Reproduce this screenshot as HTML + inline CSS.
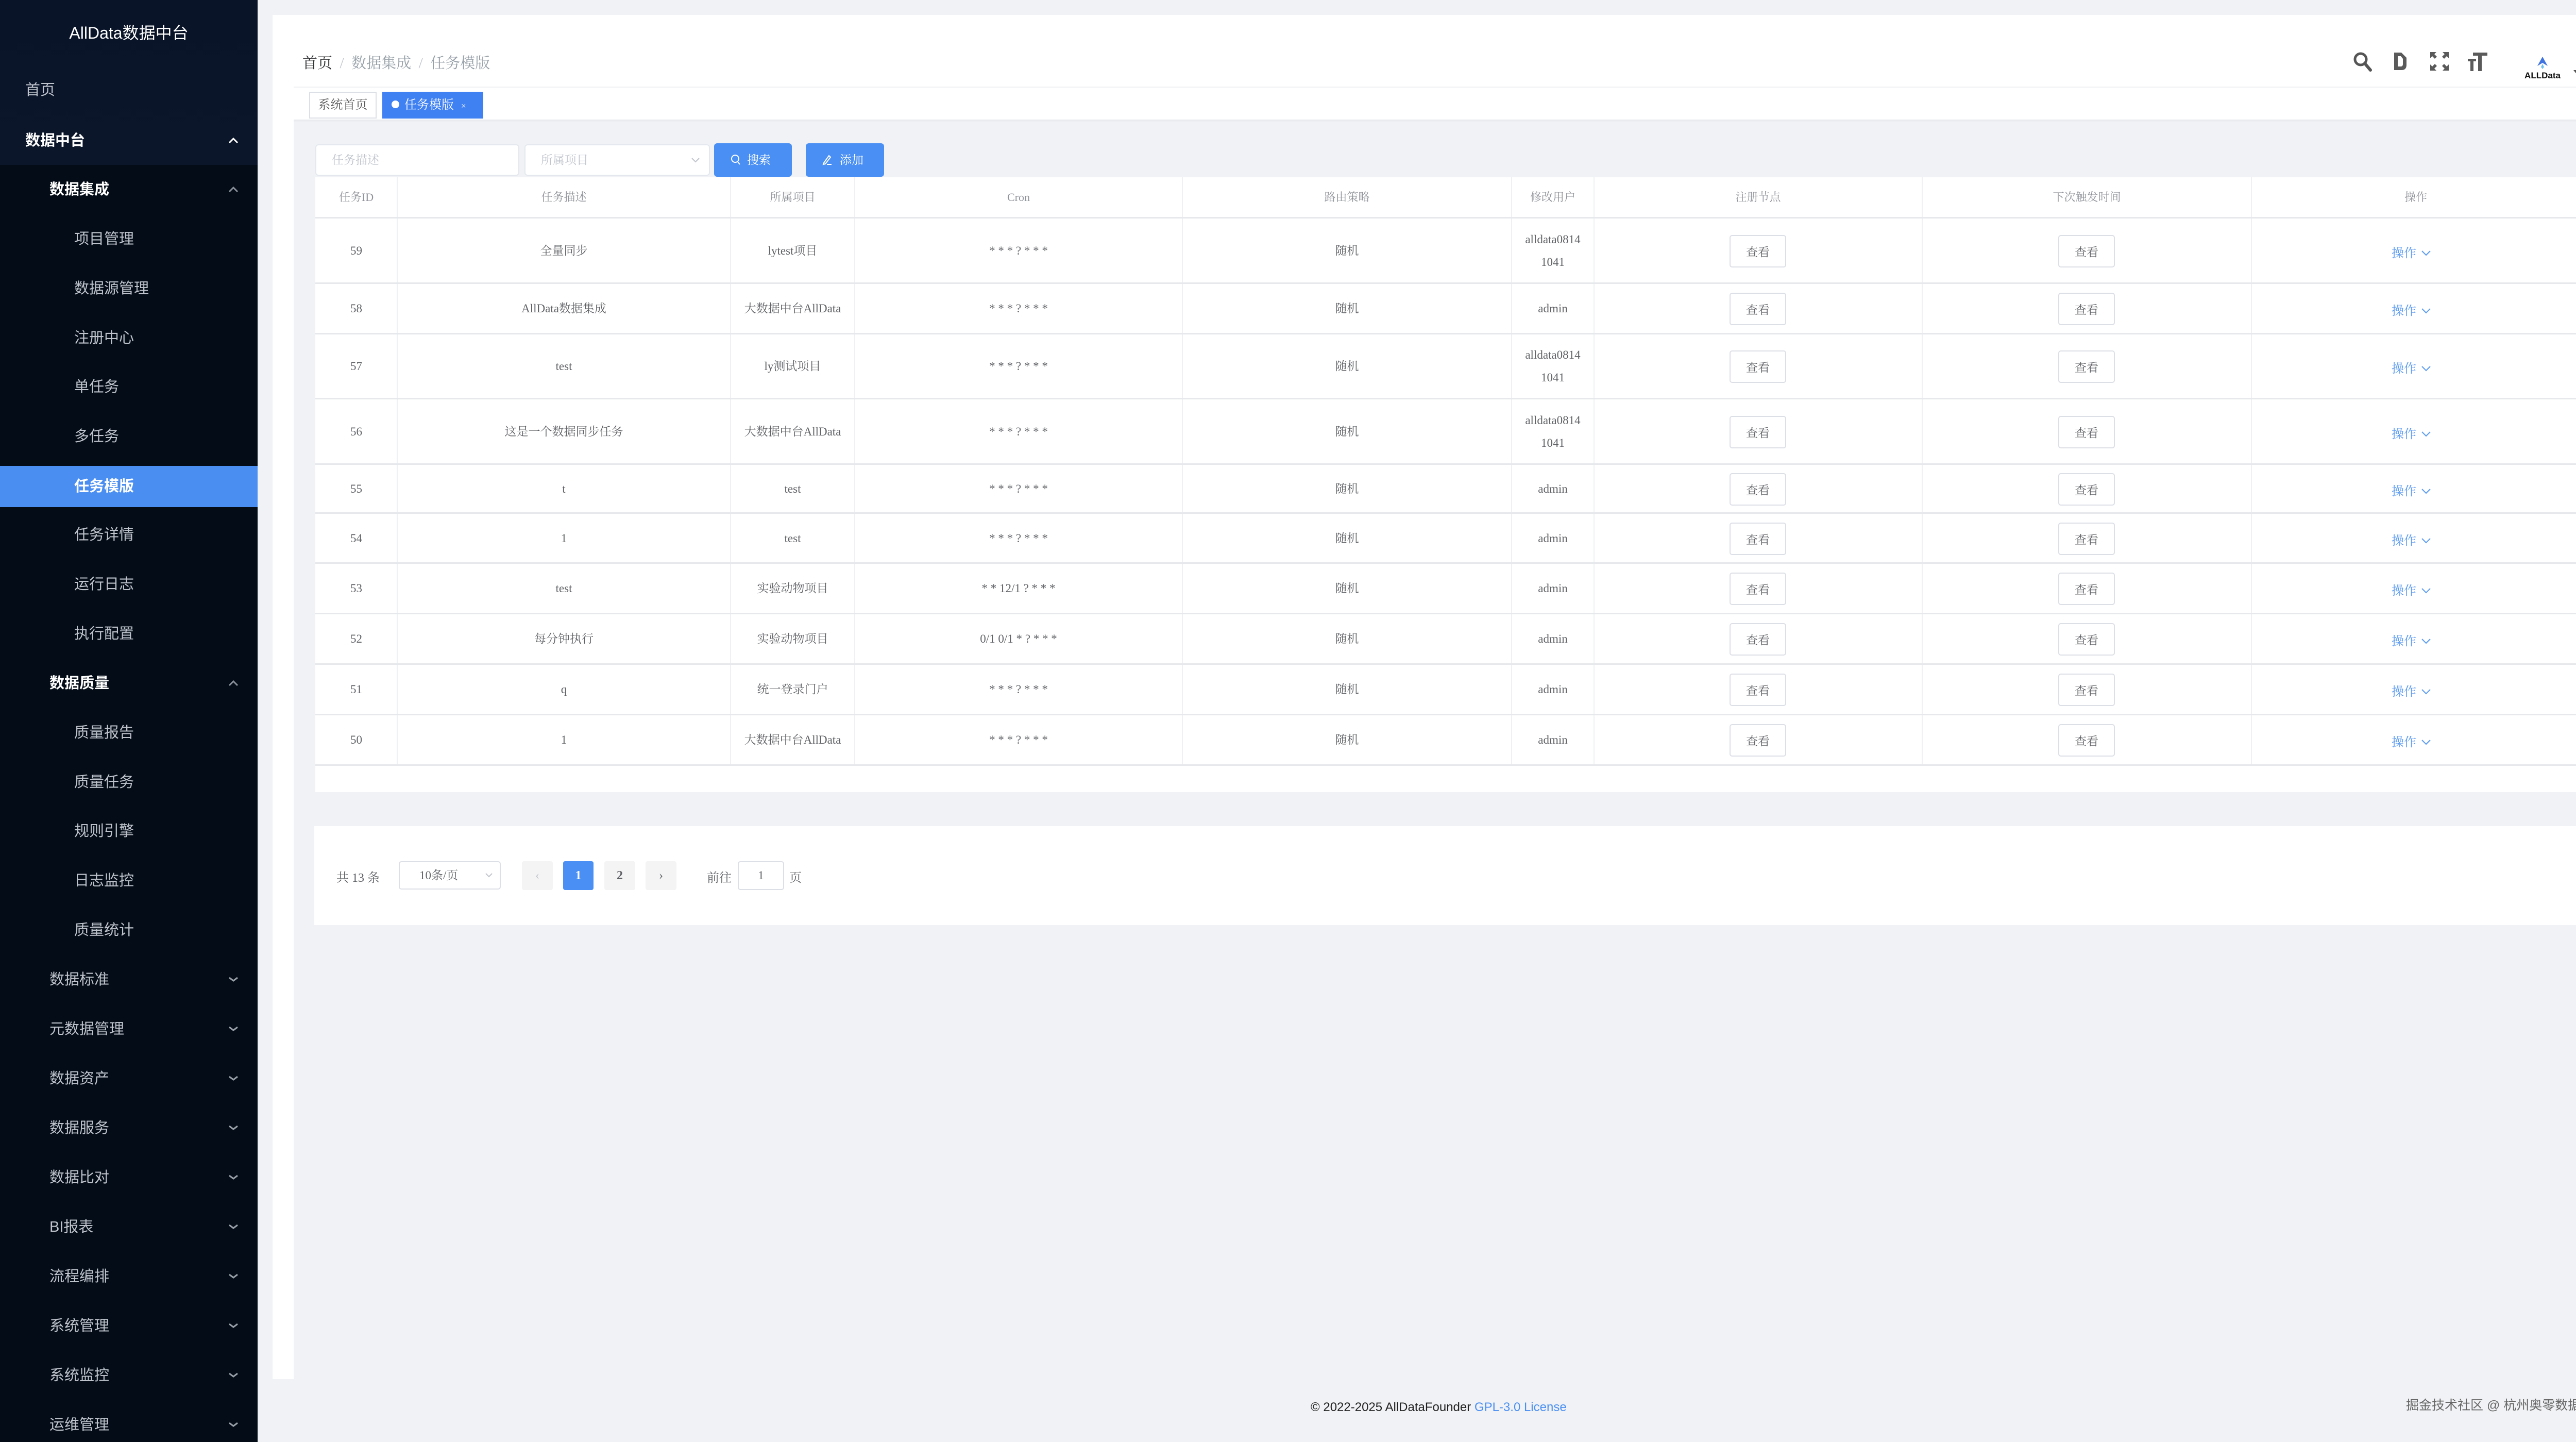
<!DOCTYPE html>
<html style="width:5118px;height:2798px;overflow:hidden"><head><meta charset="utf-8">
<style>
*{margin:0;padding:0;box-sizing:border-box}
html,body{width:5118px;height:2798px;overflow:hidden}
body{background:#f0f2f5;position:relative;font-family:"Liberation Serif","Noto Serif CJK SC",serif;color:#606266}
.abs{position:absolute;white-space:nowrap}
.side{position:absolute;left:0;top:0;width:500px;height:2798px;background:#040c17;overflow:hidden}
.sidetop{position:absolute;left:0;top:0;width:500px;height:320px;background:linear-gradient(#0a1428,#0b162b)}
.mi{position:absolute;left:0;width:500px;height:96px;line-height:96px;font-family:"Liberation Sans","Noto Sans CJK SC",sans-serif;font-size:29px;color:#bfc4cc}
.mi.b{color:#fff;font-weight:bold}
.arr{position:absolute;left:443px;top:0;width:20px;height:96px}
.card{position:absolute;left:529px;top:29px;width:4560px;height:2647px;background:#fff}
.grey{position:absolute;left:570px;top:236px;width:4479px;height:2440px;background:#f0f2f5}
.tbl{position:absolute;left:612px;top:344px;width:4396px;height:1193px;background:#fff}
.cell{position:absolute;text-align:center;font-size:23px;color:#606266;display:flex;align-items:center;justify-content:center;line-height:44px}
.vl{position:absolute;top:344px;width:2px;height:1141px;background:#eef0f4}
.hl{position:absolute;left:612px;width:4396px;height:3px;background:#e6e8eb}
.btn{position:absolute;width:110px;height:63px;border:2px solid #dcdfe6;border-radius:5px;background:#fff;font-size:23px;color:#606266;display:flex;align-items:center;justify-content:center}
.op{position:absolute;font-size:24px;color:#5b9bf2;white-space:nowrap}
</style></head><body>
<div class="side"><div class="sidetop"></div>
<div class="abs" style="left:0;top:30px;width:500px;text-align:center;font-family:'Liberation Sans','Noto Sans CJK SC',sans-serif;font-size:32px;color:#fff;line-height:68px">AllData数据中台</div>
<div class="mi" style="top:127px;padding-left:49px">首页</div>
<div class="mi b" style="top:225px;padding-left:49px">数据中台<svg class="arr" viewBox="0 0 20 96"><path d="M2 52 L10 44 L18 52" stroke="#fff" stroke-width="3" fill="none"/></svg></div>
<div class="mi b" style="top:320px;padding-left:96px">数据集成<svg class="arr" viewBox="0 0 20 96"><path d="M2 52 L10 44 L18 52" stroke="#8a9099" stroke-width="3" fill="none"/></svg></div>
<div class="mi" style="top:416px;padding-left:144px">项目管理</div>
<div class="mi" style="top:512px;padding-left:144px">数据源管理</div>
<div class="mi" style="top:608px;padding-left:144px">注册中心</div>
<div class="mi" style="top:703px;padding-left:144px">单任务</div>
<div class="mi" style="top:799px;padding-left:144px">多任务</div>
<div class="abs" style="left:0;top:904px;width:500px;height:80px;background:#4b8ef2"></div>
<div class="mi b" style="top:896px;padding-left:144px">任务模版</div>
<div class="mi" style="top:990px;padding-left:144px">任务详情</div>
<div class="mi" style="top:1086px;padding-left:144px">运行日志</div>
<div class="mi" style="top:1182px;padding-left:144px">执行配置</div>
<div class="mi b" style="top:1278px;padding-left:96px">数据质量<svg class="arr" viewBox="0 0 20 96"><path d="M2 52 L10 44 L18 52" stroke="#8a9099" stroke-width="3" fill="none"/></svg></div>
<div class="mi" style="top:1374px;padding-left:144px">质量报告</div>
<div class="mi" style="top:1470px;padding-left:144px">质量任务</div>
<div class="mi" style="top:1565px;padding-left:144px">规则引擎</div>
<div class="mi" style="top:1661px;padding-left:144px">日志监控</div>
<div class="mi" style="top:1757px;padding-left:144px">质量统计</div>
<div class="mi" style="top:1853px;padding-left:96px">数据标准<svg class="arr" viewBox="0 0 20 96"><path d="M2 44 L10 50 L18 44" stroke="#9aa0a8" stroke-width="3" fill="none"/></svg></div>
<div class="mi" style="top:1949px;padding-left:96px">元数据管理<svg class="arr" viewBox="0 0 20 96"><path d="M2 44 L10 50 L18 44" stroke="#9aa0a8" stroke-width="3" fill="none"/></svg></div>
<div class="mi" style="top:2045px;padding-left:96px">数据资产<svg class="arr" viewBox="0 0 20 96"><path d="M2 44 L10 50 L18 44" stroke="#9aa0a8" stroke-width="3" fill="none"/></svg></div>
<div class="mi" style="top:2141px;padding-left:96px">数据服务<svg class="arr" viewBox="0 0 20 96"><path d="M2 44 L10 50 L18 44" stroke="#9aa0a8" stroke-width="3" fill="none"/></svg></div>
<div class="mi" style="top:2237px;padding-left:96px">数据比对<svg class="arr" viewBox="0 0 20 96"><path d="M2 44 L10 50 L18 44" stroke="#9aa0a8" stroke-width="3" fill="none"/></svg></div>
<div class="mi" style="top:2333px;padding-left:96px">BI报表<svg class="arr" viewBox="0 0 20 96"><path d="M2 44 L10 50 L18 44" stroke="#9aa0a8" stroke-width="3" fill="none"/></svg></div>
<div class="mi" style="top:2429px;padding-left:96px">流程编排<svg class="arr" viewBox="0 0 20 96"><path d="M2 44 L10 50 L18 44" stroke="#9aa0a8" stroke-width="3" fill="none"/></svg></div>
<div class="mi" style="top:2525px;padding-left:96px">系统管理<svg class="arr" viewBox="0 0 20 96"><path d="M2 44 L10 50 L18 44" stroke="#9aa0a8" stroke-width="3" fill="none"/></svg></div>
<div class="mi" style="top:2621px;padding-left:96px">系统监控<svg class="arr" viewBox="0 0 20 96"><path d="M2 44 L10 50 L18 44" stroke="#9aa0a8" stroke-width="3" fill="none"/></svg></div>
<div class="mi" style="top:2717px;height:81px;padding-left:96px">运维管理<svg class="arr" viewBox="0 0 20 96"><path d="M2 44 L10 50 L18 44" stroke="#9aa0a8" stroke-width="3" fill="none"/></svg></div>
</div>

<div class="card"></div>
<div class="abs" style="left:570px;top:168px;width:4479px;height:2px;background:#f0f1f3"></div>
<div class="abs" style="left:587px;top:100px;font-size:29px;color:#303133;white-space:pre">首页 <span style="color:#c0c4cc"> / </span> <span style="color:#97a0a8">数据集成</span> <span style="color:#c0c4cc"> / </span> <span style="color:#97a0a8">任务模版</span></div>
<svg class="abs" style="left:4567px;top:100px" width="38" height="40" viewBox="0 0 38 40"><circle cx="15" cy="15" r="11" stroke="#555" stroke-width="5" fill="none"/><path d="M23 23 L34 36" stroke="#555" stroke-width="6" stroke-linecap="round"/></svg>
<svg class="abs" style="left:4645px;top:100px" width="30" height="38" viewBox="0 0 30 38"><path d="M2 2 H16 L26 12 V26 Q26 36 16 36 H2 Z M9 9 V29 H15 Q19 29 19 24 V14 L15 9 Z" fill="#5a5a5a" fill-rule="evenodd"/></svg>
<svg class="abs" style="left:4716px;top:100px" width="38" height="38" viewBox="0 0 38 38"><path d="M1 1h12l-4 4 5 5-4 4-5-5-4 4z M37 1v12l-4-4-5 5-4-4 5-5-4-4z M1 37v-12l4 4 5-5 4 4-5 5 4 4z M37 37h-12l4-4-5-5 4-4 5 5 4-4z" fill="#5a5a5a"/></svg>
<svg class="abs" style="left:4790px;top:100px" width="38" height="38" viewBox="0 0 38 38"><path d="M10 2h28v6h-11v30h-7V8H10z M0 14h16v5h-5v19h-6V19H0z" fill="#5a5a5a"/></svg>
<svg class="abs" style="left:4895px;top:108px" width="80" height="48" viewBox="0 0 80 48"><path d="M40 2 L50 20 L40 14 L30 20Z" fill="#3f73e0"/><path d="M40 16 L43 22 L40 26 L37 22Z" fill="#6fc3f0"/><text x="40" y="44" text-anchor="middle" font-family="Liberation Sans,sans-serif" font-weight="bold" font-size="17" fill="#111">ALLData</text></svg>
<svg class="abs" style="left:4995px;top:136px" width="16" height="12" viewBox="0 0 16 12"><path d="M0 0h16L8 10z" fill="#555"/></svg>

<div class="abs" style="left:570px;top:232px;width:4479px;height:5px;background:linear-gradient(#e4e6ea,#f0f2f5)"></div>
<div class="abs" style="left:600px;top:178px;width:131px;height:52px;border:2px solid #dcdfe6;background:#fff;font-size:24px;color:#555;text-align:center;line-height:48px">系统首页</div>
<div class="abs" style="left:742px;top:178px;width:196px;height:52px;background:#3f80f3;font-size:24px;color:#fff;line-height:52px;padding-left:18px"><span style="display:inline-block;width:15px;height:15px;border-radius:50%;background:#fff;margin-right:10px;vertical-align:1px"></span>任务模版 <span style="font-size:17px;margin-left:8px">×</span></div>

<div class="grey"></div>
<div class="abs" style="left:612px;top:280px;width:396px;height:61px;border:2px solid #e4e7ed;border-radius:6px;background:#fff;font-size:23px;color:#c0c4cc;line-height:57px;padding-left:30px">任务描述</div>
<div class="abs" style="left:1018px;top:280px;width:360px;height:61px;border:2px solid #e4e7ed;border-radius:6px;background:#fff;font-size:23px;color:#c0c4cc;line-height:57px;padding-left:30px">所属项目<svg style="position:absolute;right:18px;top:24px" width="16" height="10" viewBox="0 0 16 10"><path d="M1 1 L8 8 L15 1" stroke="#c0c4cc" stroke-width="2" fill="none"/></svg></div>
<div class="abs" style="left:1386px;top:278px;width:151px;height:65px;border-radius:6px;background:#4a8ff3;color:#fff;font-size:23px;line-height:65px;padding-left:32px"><svg style="vertical-align:-3px;margin-right:12px" width="20" height="22" viewBox="0 0 20 22"><circle cx="9" cy="9" r="7" stroke="#fff" stroke-width="2" fill="none"/><path d="M14 15 L18 20" stroke="#fff" stroke-width="2"/></svg>搜索</div>
<div class="abs" style="left:1564px;top:278px;width:152px;height:65px;border-radius:6px;background:#4a8ff3;color:#fff;font-size:23px;line-height:65px;padding-left:32px"><svg style="vertical-align:-3px;margin-right:12px" width="22" height="22" viewBox="0 0 22 22"><path d="M3 17 L13 3 L16 6 L6 19 L2 20 Z M9 20 H18" stroke="#fff" stroke-width="2" fill="none"/></svg>添加</div>

<div class="tbl"></div>
<div class="vl" style="left:770px"></div><div class="vl" style="left:1417px"></div><div class="vl" style="left:1658px"></div><div class="vl" style="left:2294px"></div><div class="vl" style="left:2933px"></div><div class="vl" style="left:3093px"></div><div class="vl" style="left:3730px"></div><div class="vl" style="left:4369px"></div>
<div class="hl" style="top:421px"></div><div class="hl" style="top:548px"></div><div class="hl" style="top:646px"></div><div class="hl" style="top:772px"></div><div class="hl" style="top:899px"></div><div class="hl" style="top:994px"></div><div class="hl" style="top:1091px"></div><div class="hl" style="top:1189px"></div><div class="hl" style="top:1287px"></div><div class="hl" style="top:1385px"></div><div class="hl" style="top:1483px"></div>

<div id="rows"></div>
<script>
var cols=[612,771,1418,1659,2295,2934,3094,3731,4370,5008];
var H=["任务ID","任务描述","所属项目","Cron","路由策略","修改用户","注册节点","下次触发时间","操作"];
var rows=[
[424,550,"59","全量同步","lytest项目","* * * ? * * *","alldata0814<br>1041"],
[550,648,"58","AllData数据集成","大数据中台AllData","* * * ? * * *","admin"],
[648,774,"57","test","ly测试项目","* * * ? * * *","alldata0814<br>1041"],
[774,901,"56","这是一个数据同步任务","大数据中台AllData","* * * ? * * *","alldata0814<br>1041"],
[901,996,"55","t","test","* * * ? * * *","admin"],
[996,1093,"54","1","test","* * * ? * * *","admin"],
[1093,1191,"53","test","实验动物项目","* * 12/1 ? * * *","admin"],
[1191,1289,"52","每分钟执行","实验动物项目","0/1 0/1 * ? * * *","admin"],
[1289,1387,"51","q","统一登录门户","* * * ? * * *","admin"],
[1387,1485,"50","1","大数据中台AllData","* * * ? * * *","admin"]];
var h="";
function cell(i,t,b,txt,st){h+='<div class="cell" style="left:'+cols[i]+'px;width:'+(cols[i+1]-cols[i])+'px;top:'+t+'px;height:'+(b-t)+'px;'+(st||'')+'">'+txt+'</div>';}
for(var i=0;i<9;i++)cell(i,344,421,H[i],'color:#909399;font-size:22px');
rows.forEach(function(r){var t=r[0],b=r[1];
cell(0,t,b,r[2]);cell(1,t,b,r[3]);cell(2,t,b,r[4]);cell(3,t,b,r[5]);cell(4,t,b,"随机");cell(5,t,b,r[6]);
var m=(t+b)/2;
h+='<div class="btn" style="left:3357px;top:'+(m-31)+'px">查看</div>';
h+='<div class="btn" style="left:3995px;top:'+(m-31)+'px">查看</div>';
h+='<div class="op" style="left:4642px;top:'+(m-16)+'px">操作 <svg width="18" height="12" viewBox="0 0 18 12" style="margin-left:4px;vertical-align:2px"><path d="M1 2 L9 10 L17 2" stroke="#5b9bf2" stroke-width="2" fill="none"/></svg></div>';
});
document.getElementById("rows").innerHTML=h;
</script>

<div class="abs" style="left:610px;top:1603px;width:4398px;height:192px;background:#fff"></div>
<div class="abs" style="left:653px;top:1683px;font-size:24px;color:#606266">共 13 条</div>
<div class="abs" style="left:774px;top:1671px;width:198px;height:55px;border:2px solid #dcdfe6;border-radius:5px;font-size:23px;line-height:51px;padding-left:38px;color:#606266">10条/页<svg style="position:absolute;right:14px;top:21px" width="14" height="9" viewBox="0 0 14 9"><path d="M1 1 L7 7 L13 1" stroke="#c0c4cc" stroke-width="2" fill="none"/></svg></div>
<div class="abs" style="left:1013px;top:1671px;width:60px;height:56px;background:#f4f4f5;border-radius:4px;color:#c0c4cc;font-size:24px;text-align:center;line-height:56px">‹</div>
<div class="abs" style="left:1093px;top:1671px;width:59px;height:56px;background:#4a8ff3;border-radius:4px;color:#fff;font-size:24px;text-align:center;line-height:56px;font-weight:bold">1</div>
<div class="abs" style="left:1173px;top:1671px;width:60px;height:56px;background:#f4f4f5;border-radius:4px;color:#606266;font-size:24px;text-align:center;line-height:56px;font-weight:bold">2</div>
<div class="abs" style="left:1253px;top:1671px;width:60px;height:56px;background:#f4f4f5;border-radius:4px;color:#606266;font-size:24px;text-align:center;line-height:56px">›</div>
<div class="abs" style="left:1372px;top:1683px;font-size:24px;color:#606266">前往</div>
<div class="abs" style="left:1432px;top:1671px;width:90px;height:56px;border:2px solid #dcdfe6;border-radius:5px;font-size:23px;text-align:center;line-height:52px">1</div>
<div class="abs" style="left:1532px;top:1683px;font-size:24px;color:#606266">页</div>

<div class="abs" style="left:2544px;top:2717px;font-family:'Liberation Sans',sans-serif;font-size:24px;color:#222">© 2022-2025 AllDataFounder <span style="color:#4a8ff3">GPL-3.0 License</span></div>
<div class="abs" style="left:4670px;top:2707px;font-family:'Liberation Sans','Noto Sans CJK SC',sans-serif;font-size:25px;color:#666">掘金技术社区 @ 杭州奥零数据科技</div>
</body></html>
